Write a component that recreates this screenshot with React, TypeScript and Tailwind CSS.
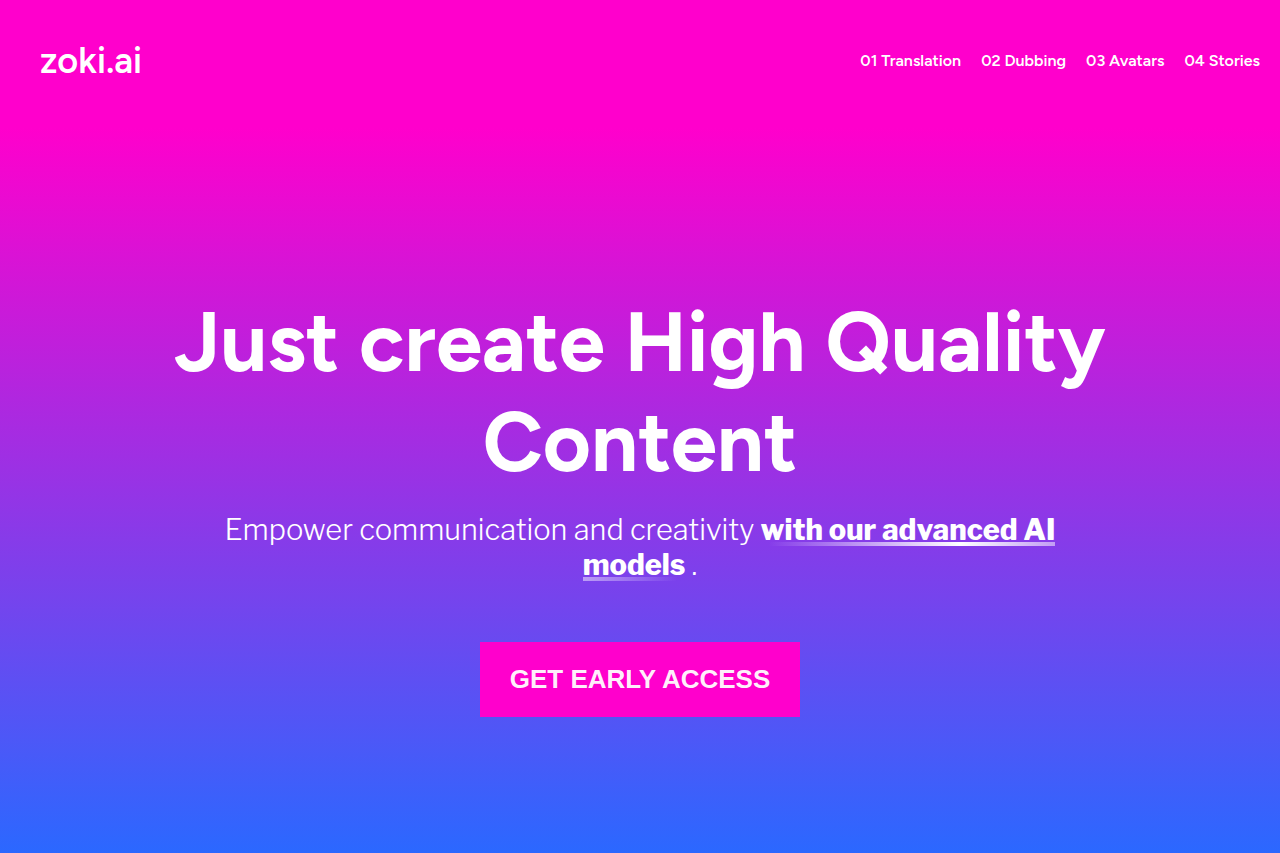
const links = ["01 Translation", "02 Dubbing", "03 Avatars", "04 Stories"];

export default function App() {
  return (
    <div className="flex min-h-screen flex-col bg-[linear-gradient(180deg,#ff00cc_15%,#2b68ff_100%)] font-['Figtree','Inter',sans-serif] text-white">
      <header className="flex h-[122px] items-center justify-between pr-5 pl-10">
        <a href="#home" className="text-[36px] leading-10 font-semibold">
          zoki.ai
        </a>
        <nav className="flex gap-5 text-base leading-6 font-semibold">
          {links.map((link) => (
            <a key={link} href={"#" + link.slice(3).toLowerCase()}>
              {link}
            </a>
          ))}
        </nav>
      </header>
      <main className="flex grow flex-col items-center px-5 pt-[170px] text-center">
        <h1 className="max-w-[1000px] text-[83px] leading-[100px] font-bold">
          Just create High Quality Content
        </h1>
        <p className="mt-5 max-w-[900px] font-['Libre_Franklin','Open_Sans',sans-serif] text-[29px] leading-[35px] font-light">
          Empower communication and creativity{" "}
          <strong className="bg-[linear-gradient(90deg,transparent_2%,#ffffff_50%,transparent_98%)] bg-[length:100%_4px] bg-[position:0_calc(100%-1px)] bg-no-repeat font-extrabold">
            with our advanced AI models
          </strong>{" "}
          .
        </p>
        <button
          type="button"
          className="mt-15 mb-30 h-[75px] w-80 bg-[#ff00cc] font-['Liberation_Sans',Arial,sans-serif] text-[26px] font-bold text-white/95"
        >
          GET EARLY ACCESS
        </button>
      </main>
    </div>
  );
}
